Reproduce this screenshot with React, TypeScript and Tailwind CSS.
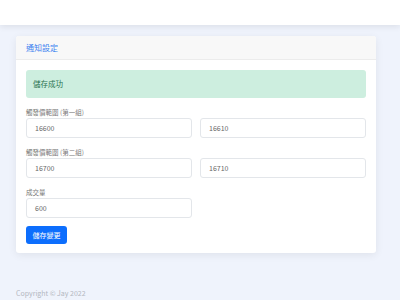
import React from "react";

const font = { fontFamily: '"Noto Sans CJK TC", "Noto Sans", sans-serif' };

function Field({ value }: { value: string }) {
  return (
    <div className="h-[20px] border border-[#e3e6ea] rounded-[3px] bg-white px-[8px] flex items-center text-[7px] text-[#666]">
      {value}
    </div>
  );
}

function Label({ children }: { children: React.ReactNode }) {
  return <div className="h-[8px] leading-[8px] text-[6.5px] text-[#777] mb-[2px]">{children}</div>;
}

export default function App() {
  return (
    <div className="min-h-[300px] bg-[#eff3fc] flex flex-col" style={font}>
      <div className="h-[25px] bg-white shadow-[0_2px_6px_rgba(0,0,0,0.08)]" />
      <div className="px-4 pt-[11px]">
        <div className="w-[360px] bg-white rounded-[3px] shadow-[0_2px_8px_rgba(0,0,0,0.07)] overflow-hidden">
          <div className="h-[24px] bg-[#f8f8f8] border-b border-[#ececec] px-[10px] flex items-center text-[8px] text-[#3c82f0]">
            通知設定
          </div>
          <div className="px-[10px] pt-[10px] pb-[9px]">
            <div className="h-[28px] rounded-[3px] bg-[#cdeedf] px-[7px] flex items-center text-[7.5px] text-[#2a7350]">
              儲存成功
            </div>
            <div className="mt-[10px]">
              <Label>觸發價範圍 (第一組)</Label>
              <div className="grid grid-cols-2 gap-[8px]">
                <Field value="16600" />
                <Field value="16610" />
              </div>
            </div>
            <div className="mt-[10px]">
              <Label>觸發價範圍 (第二組)</Label>
              <div className="grid grid-cols-2 gap-[8px]">
                <Field value="16700" />
                <Field value="16710" />
              </div>
            </div>
            <div className="mt-[10px]">
              <Label>成交量</Label>
              <div className="grid grid-cols-2 gap-[8px]">
                <Field value="600" />
              </div>
            </div>
            <div className="mt-[8px] w-[41px] h-[18px] rounded-[3px] bg-[#0d6efd] text-white text-[7px] flex items-center justify-center">
              儲存變更
            </div>
          </div>
        </div>
        <div className="mt-[36px] text-[7px] text-[#b3b7bf] leading-[8px]">Copyright © Jay 2022</div>
      </div>
    </div>
  );
}
